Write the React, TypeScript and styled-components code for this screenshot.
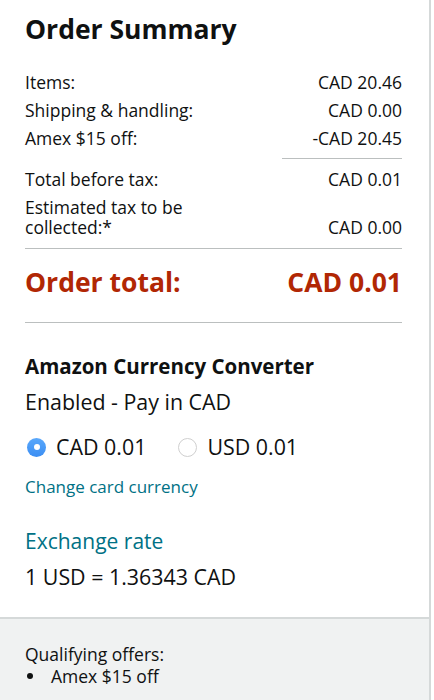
import styled, { createGlobalStyle } from 'styled-components';

const GlobalStyle = createGlobalStyle`
  html, body {
    margin: 0;
    padding: 0;
    background: #ffffff;
  }
  body {
    font-family: "Open Sans", "Noto Sans", "Liberation Sans", sans-serif;
    font-weight: 500;
    color: #0f1111;
    -webkit-font-smoothing: antialiased;
  }
`;

const Panel = styled.div`
  width: 429px;
  border-right: 2px solid #d5d9d9;
  background: #ffffff;
`;

const Body = styled.div`
  padding: 13px 27px 27px 25px;
  border-bottom: 2px solid #d5d9d9;
`;

const Title = styled.h1`
  margin: 0 0 23px;
  font-size: 26.5px;
  line-height: 32px;
  font-weight: 700;
`;

const Row = styled.div`
  display: flex;
  justify-content: space-between;
  align-items: flex-end;
  padding: 4px 0;
  font-size: 17.5px;
  line-height: 20px;
`;

const Label = styled.span<{ $narrow?: boolean }>`
  max-width: ${({ $narrow }) => ($narrow ? '180px' : 'none')};
`;

const Divider = styled.hr<{ $short?: boolean; $gap?: string }>`
  border: 0;
  height: 1px;
  background: #bbbfbf;
  margin: ${({ $gap }) => $gap || '6px 0'};
  width: ${({ $short }) => ($short ? '120px' : '100%')};
  margin-left: auto;
`;

const TotalRow = styled.div`
  display: flex;
  justify-content: space-between;
  align-items: center;
  color: #b12704;
  font-size: 26.5px;
  line-height: 30px;
  font-weight: 700;
  margin-top: 18px;
`;

const SectionTitle = styled.h2`
  margin: 31px 0 11px;
  font-size: 20.5px;
  line-height: 24px;
  font-weight: 700;
`;

const Text = styled.div<{ $gap?: string }>`
  font-size: 21.4px;
  line-height: 26px;
  margin: ${({ $gap }) => $gap || '0'};
`;

const RadioRow = styled.div`
  display: flex;
  align-items: center;
  gap: 30px;
  margin-top: 19px;
  font-size: 21.4px;
  line-height: 26px;
`;

const Option = styled.label`
  display: flex;
  align-items: center;
  gap: 10px;
`;

const Radio = styled.span<{ $checked?: boolean }>`
  box-sizing: border-box;
  width: 19px;
  height: 19px;
  margin-left: 2px;
  border-radius: 50%;
  display: flex;
  align-items: center;
  justify-content: center;
  background: ${({ $checked }) =>
    $checked ? 'linear-gradient(#5aa8fb, #3b8ef3)' : '#ffffff'};
  border: ${({ $checked }) => ($checked ? '0' : '1px solid #cfcfcf')};

  &::after {
    content: '';
    display: ${({ $checked }) => ($checked ? 'block' : 'none')};
    width: 6px;
    height: 6px;
    border-radius: 50%;
    background: #ffffff;
  }
`;

const Link = styled.a<{ $large?: boolean }>`
  display: block;
  color: #007185;
  text-decoration: none;
  font-size: ${({ $large }) => ($large ? '21px' : '17px')};
  line-height: ${({ $large }) => ($large ? '26px' : '20px')};
  margin-top: ${({ $large }) => ($large ? '31px' : '17px')};
`;

const Offers = styled.div`
  background: #f0f2f2;
  padding: 25px 25px 20px;
  font-size: 17.5px;
  line-height: 20px;
`;

const OfferList = styled.ul`
  list-style: none;
  margin: 2px 0 0;
  padding: 0;
`;

const OfferItem = styled.li`
  display: flex;
  align-items: center;
  gap: 18px;
  padding-left: 2px;

  &::before {
    content: '';
    width: 6px;
    height: 6px;
    border-radius: 50%;
    background: #0f1111;
  }
`;

const summary = [
  { label: 'Items:', value: 'CAD 20.46' },
  { label: 'Shipping & handling:', value: 'CAD 0.00' },
  { label: 'Amex $15 off:', value: '-CAD 20.45' },
];

export default function App() {
  return (
    <>
      <GlobalStyle />
      <Panel>
        <Body>
          <Title>Order Summary</Title>
          {summary.map((r) => (
            <Row key={r.label}>
              <Label>{r.label}</Label>
              <span>{r.value}</span>
            </Row>
          ))}
          <Divider $short />
          <Row>
            <Label>Total before tax:</Label>
            <span>CAD 0.01</span>
          </Row>
          <Row>
            <Label $narrow>Estimated tax to be collected:*</Label>
            <span>CAD 0.00</span>
          </Row>
          <Divider $gap="7px 0 0" />
          <TotalRow>
            <span>Order total:</span>
            <span>CAD 0.01</span>
          </TotalRow>
          <Divider $gap="25px 0 0" />
          <SectionTitle>Amazon Currency Converter</SectionTitle>
          <Text>Enabled - Pay in CAD</Text>
          <RadioRow>
            <Option>
              <Radio $checked />
              CAD 0.01
            </Option>
            <Option>
              <Radio />
              USD 0.01
            </Option>
          </RadioRow>
          <Link href="#">Change card currency</Link>
          <Link $large href="#">Exchange rate</Link>
          <Text $gap="10px 0 0">1 USD = 1.36343 CAD</Text>
        </Body>
        <Offers>
          Qualifying offers:
          <OfferList>
            <OfferItem>Amex $15 off</OfferItem>
          </OfferList>
        </Offers>
      </Panel>
    </>
  );
}
